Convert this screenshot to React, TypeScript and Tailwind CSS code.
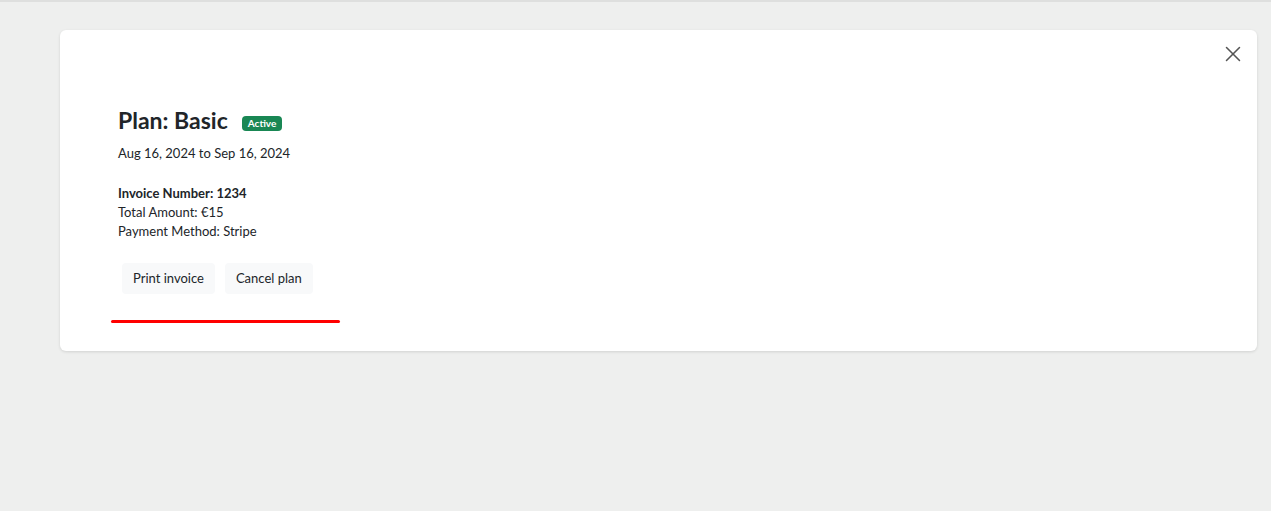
import { X } from "lucide-react";

export default function App() {
    return (
        <div className="min-h-[511px] w-full border-t-2 border-[#dedfde] bg-[#eeefee] pt-[28px] pl-[60px] pr-[14px] font-['Lato',sans-serif] text-[#212529]">
            <div className="relative rounded-md bg-white pl-[58px] pt-[76px] pb-[28px] shadow-[0_1px_3px_rgba(0,0,0,0.12)]">
                <button type="button" className="absolute right-[10px] top-[10px] flex h-7 w-7 items-center justify-center text-[#555]">
                    <X className="h-[26px] w-[26px]" strokeWidth={1.4} />
                </button>
                <div className="flex items-center gap-[14px]">
                    <h2 className="text-[23px] font-bold leading-[28px]">Plan: Basic</h2>
                    <span className="mt-[6px] rounded-[4px] bg-[#198754] px-[6px] py-[2px] text-[10px] font-bold leading-[11px] text-white">Active</span>
                </div>
                <p className="mt-[10px] text-[13px] leading-[19px]">Aug 16, 2024 to Sep 16, 2024</p>
                <div className="mt-[21px] text-[13px] leading-[19px]">
                    <p className="font-bold">Invoice Number: 1234</p>
                    <p>Total Amount: €15</p>
                    <p>Payment Method: Stripe</p>
                </div>
                <div className="mt-[22px] flex gap-[10px] pl-[4px]">
                    <button type="button" className="h-[31px] rounded-[4px] bg-[#f8f9fa] px-[11px] text-[13px]">Print invoice</button>
                    <button type="button" className="h-[31px] rounded-[4px] bg-[#f8f9fa] px-[11px] text-[13px]">Cancel plan</button>
                </div>
                <div className="mt-[26px] -ml-[7px] h-[3px] w-[229px] rounded-full bg-[#ff0000]" />
            </div>
        </div>
    );
}
